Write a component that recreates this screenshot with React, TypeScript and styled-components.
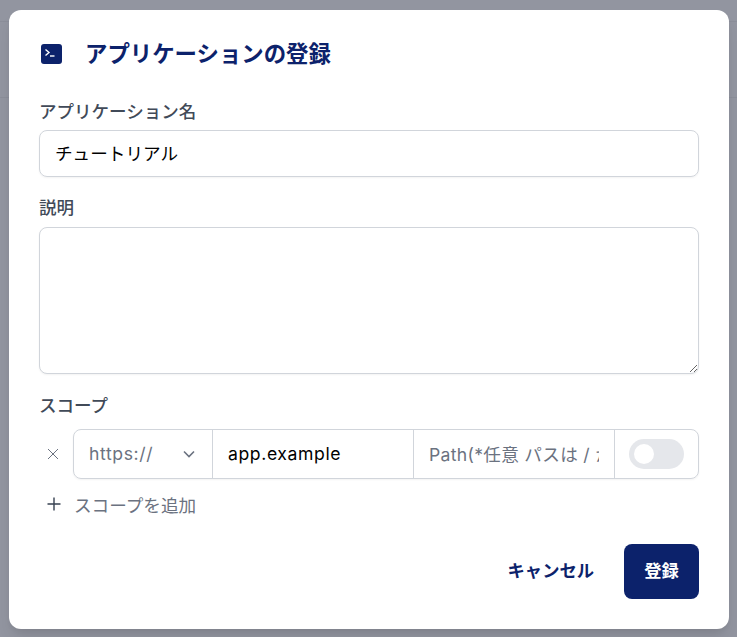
import React from "react";
import styled, { createGlobalStyle } from "styled-components";

const Global = createGlobalStyle`
  html, body { margin: 0; padding: 0; }
  body { font-family: "Inter", "Noto Sans CJK JP", sans-serif; }
  * { box-sizing: border-box; }
`;

const Backdrop = styled.div`
  width: 737px;
  height: 637px;
  overflow: hidden;
  background-color: #9295a0;
  background-image: linear-gradient(#8b8e99, #8b8e99), linear-gradient(#8b8e99, #8b8e99);
  background-repeat: no-repeat;
  background-size: 100% 1px, 100% 1px;
  background-position: 0 21px, 0 97px;
  padding: 10px 8px 8px 9px;
`;

const Modal = styled.div`
  width: 720px;
  height: 619px;
  background: #fff;
  border-radius: 12px;
  padding: 30px;
  display: flex;
  flex-direction: column;
  box-shadow: 0 10px 15px -3px rgba(0, 0, 0, 0.1), 0 4px 6px -2px rgba(0, 0, 0, 0.05);
`;

const Header = styled.div`
  display: flex;
  align-items: center;
  height: 28px;
  gap: 22px;
  margin-left: 2px;
  color: #0c226b;
  font-size: 22.4px;
  font-weight: 600;
  line-height: 28px;
`;

const Title = styled.h2`
  margin: 0;
  font: inherit;
`;

const Label = styled.label<{ $top: number }>`
  display: block;
  margin-top: ${(p) => p.$top}px;
  color: #414a58;
  font-size: 17.5px;
  font-weight: 500;
  line-height: 24px;
  height: 24px;
`;

const TextInput = styled.div`
  margin-top: 6px;
  height: 47px;
  border: 1px solid #d1d5db;
  border-radius: 8px;
  padding: 0 15px 3px;
  display: flex;
  align-items: center;
  color: #000;
  font-size: 17.6px;
  box-shadow: 0 1px 2px rgba(0, 0, 0, 0.05);
`;

const TextArea = styled.textarea`
  display: block;
  margin-top: 7px;
  width: 100%;
  height: 147px;
  border: 1px solid #d1d5db;
  border-radius: 8px;
  outline: none;
  padding: 12px 16px;
  resize: vertical;
  font: inherit;
  box-shadow: 0 1px 2px rgba(0, 0, 0, 0.05);
`;

const ScopeRow = styled.div`
  margin-top: 11px;
  display: flex;
  align-items: center;
`;

const IconSlot = styled.span<{ $width?: number }>`
  width: ${(p) => p.$width ?? 34}px;
  flex: none;
  display: flex;
  align-items: center;
  justify-content: center;
  padding-right: 6px;
`;

const Group = styled.div`
  flex: 1;
  height: 50px;
  display: flex;
  border: 1px solid #d1d5db;
  border-radius: 8px;
  font-size: 17.6px;
  letter-spacing: 0.6px;
  box-shadow: 0 1px 2px rgba(0, 0, 0, 0.05);
`;

const Cell = styled.div<{ $width: number; $muted?: boolean }>`
  width: ${(p) => p.$width}px;
  flex: none;
  height: 100%;
  display: flex;
  align-items: center;
  justify-content: space-between;
  padding: 0 15px 1px;
  overflow: hidden;
  white-space: nowrap;
  color: ${(p) => (p.$muted ? "#6b7280" : "#000")};
  border-right: 1px solid #d1d5db;
  &:last-child {
    border-right: 0;
    padding: 0 14px;
  }
`;

const Chevron = styled.svg`
  flex: none;
  margin-right: 2px;
`;

const Clip = styled.span`
  display: block;
  width: 100%;
  overflow: hidden;
  letter-spacing: 0.3px;
`;

const Track = styled.span`
  width: 55px;
  height: 30px;
  border-radius: 15px;
  background: #e5e7eb;
  flex: none;
  padding: 5px;
  display: block;
`;

const Knob = styled.span`
  display: block;
  width: 20px;
  height: 20px;
  border-radius: 50%;
  background: #fff;
`;

const AddRow = styled.div`
  margin-top: 13px;
  display: flex;
  align-items: center;
  height: 24px;
  color: #6b7280;
  font-size: 17.6px;
`;

const Footer = styled.div`
  margin-top: auto;
  display: flex;
  justify-content: flex-end;
  align-items: center;
  gap: 14px;
`;

const Button = styled.button<{ $primary?: boolean }>`
  height: 55px;
  width: ${(p) => (p.$primary ? "75px" : "auto")};
  border: 0;
  border-radius: 8px;
  padding: 0 ${(p) => (p.$primary ? 0 : 16)}px 4px;
  background: ${(p) => (p.$primary ? "#0c226b" : "transparent")};
  color: ${(p) => (p.$primary ? "#fff" : "#0c226b")};
  font: inherit;
  font-size: 17.3px;
  font-weight: 600;
`;

export default function App() {
  return (
    <Backdrop>
      <Global />
      <Modal>
        <Header>
          <svg width="22" height="20" viewBox="0 0 22 20">
            <rect x="0" y="0" width="21" height="20" rx="3" fill="#0c226b" />
            <path d="M4.5 5.5 8 8.5 4.5 11.5" fill="none" stroke="#fff" strokeWidth="1.4" />
            <path d="M9 12h4.5" stroke="#fff" strokeWidth="1.4" />
          </svg>
          <Title>アプリケーションの登録</Title>
        </Header>
        <Label $top={32}>アプリケーション名</Label>
        <TextInput>チュートリアル</TextInput>
        <Label $top={19}>説明</Label>
        <TextArea />
        <Label $top={20}>スコープ</Label>
        <ScopeRow>
          <IconSlot>
            <svg width="14" height="14" viewBox="0 0 14 14">
              <path d="M2 2 12 12M12 2 2 12" stroke="#6b7280" strokeWidth="1" />
            </svg>
          </IconSlot>
          <Group>
            <Cell $width={139} $muted>
              https://
              <Chevron width="12" height="8" viewBox="0 0 12 8">
                <path d="M1 1.5 6 6.5 11 1.5" fill="none" stroke="#6b7280" strokeWidth="1.6" />
              </Chevron>
            </Cell>
            <Cell $width={201}>app.example</Cell>
            <Cell $width={201} $muted>
              <Clip>Path(*任意 パスは / からはじめる)</Clip>
            </Cell>
            <Cell $width={83}>
              <Track>
                <Knob />
              </Track>
            </Cell>
          </Group>
        </ScopeRow>
        <AddRow>
          <IconSlot $width={35}>
            <svg width="16" height="16" viewBox="0 0 16 16">
              <path d="M8 1.5v13M1.5 8h13" stroke="#374151" strokeWidth="1.4" />
            </svg>
          </IconSlot>
          スコープを追加
        </AddRow>
        <Footer>
          <Button>キャンセル</Button>
          <Button $primary>登録</Button>
        </Footer>
      </Modal>
    </Backdrop>
  );
}
